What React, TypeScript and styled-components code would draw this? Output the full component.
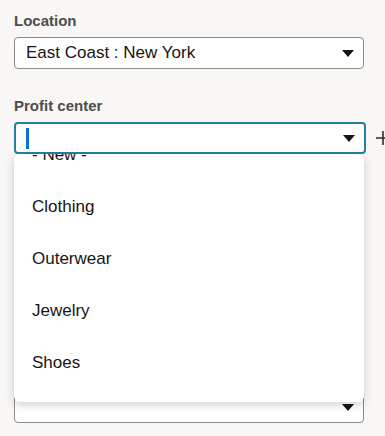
import React from "react";
import styled, { createGlobalStyle } from "styled-components";

const GlobalStyle = createGlobalStyle`
    html, body {
        margin: 0;
        padding: 0;
        background: #f8f7f5;
        font-family: "Liberation Sans", Arial, sans-serif;
        overflow: hidden;
    }
`;

const Form = styled.div`
    display: flex;
    flex-direction: column;
    gap: 28px;
    padding: 12px 0 0 14px;
    width: 400px;
`;

const Field = styled.div<{ $offset?: number }>`
    display: flex;
    flex-direction: column;
    margin-top: ${(p) => p.$offset || 0}px;
`;

const Label = styled.label`
    font-size: 15px;
    line-height: 18px;
    font-weight: bold;
    color: #4f4d4a;
    margin-bottom: 7px;
`;

const Row = styled.div`
    display: flex;
    align-items: center;
    gap: 10px;
`;

const ControlWrap = styled.div`
    position: relative;
    flex-shrink: 0;
    width: 352px;
`;

const Select = styled.div<{ $focused?: boolean }>`
    display: flex;
    align-items: center;
    box-sizing: border-box;
    width: ${(p) => (p.$focused ? 352 : 350)}px;
    height: 32px;
    padding: 0 9px 0 ${(p) => (p.$focused ? 10 : 11)}px;
    background: #fff;
    border: ${(p) => (p.$focused ? "2px solid #23809f" : "1px solid #8d8a86")};
    border-radius: 4px;
    font-size: 17px;
    color: #161513;
`;

const Value = styled.span`
    flex: 1;
    white-space: nowrap;
`;

const Caret = styled.span`
    display: inline-block;
    width: 3px;
    height: 21px;
    background: #0a72d2;
`;

const Spacer = styled.span`
    flex: 1;
`;

const Menu = styled.div`
    position: absolute;
    top: 100%;
    left: 0;
    width: 350px;
    height: 248px;
    background: #fff;
    border-radius: 6px;
    box-shadow: 0 3px 10px rgba(0, 0, 0, 0.18);
    overflow: hidden;
    z-index: 10;
`;

const List = styled.ul`
    list-style: none;
    margin: -25px 0 0;
    padding: 0;
`;

const Item = styled.li`
    height: 52px;
    display: flex;
    align-items: center;
    padding-left: 18px;
    font-size: 17px;
    color: #161513;
`;

const AddButton = styled.span`
    display: flex;
    flex-shrink: 0;
    width: 14px;
    height: 14px;
`;

const Arrow = () => (
    <svg width="12" height="7" viewBox="0 0 12 7">
        <path d="M0 0 H12 L6 7 Z" fill="#161513" />
    </svg>
);

const Plus = () => (
    <AddButton>
        <svg width="14" height="14" viewBox="0 0 14 14">
            <path d="M7 0 V14 M0 7 H14" stroke="#2e2d2b" strokeWidth="1.6" />
        </svg>
    </AddButton>
);

const options = ["- New -", "Clothing", "Outerwear", "Jewelry", "Shoes"];

export default function App() {
    return (
        <>
            <GlobalStyle />
            <Form>
                <Field>
                    <Label>Location</Label>
                    <Select>
                        <Value>East Coast : New York</Value>
                        <Arrow />
                    </Select>
                </Field>
                <Field>
                    <Label>Profit center</Label>
                    <Row>
                        <ControlWrap>
                            <Select $focused>
                                <Caret />
                                <Spacer />
                                <Arrow />
                            </Select>
                            <Menu>
                                <List>
                                    {options.map((o) => (
                                        <Item key={o}>{o}</Item>
                                    ))}
                                </List>
                            </Menu>
                        </ControlWrap>
                        <Plus />
                    </Row>
                </Field>
                <Field $offset={209}>
                    <Select>
                        <Spacer />
                        <Arrow />
                    </Select>
                </Field>
            </Form>
        </>
    );
}
